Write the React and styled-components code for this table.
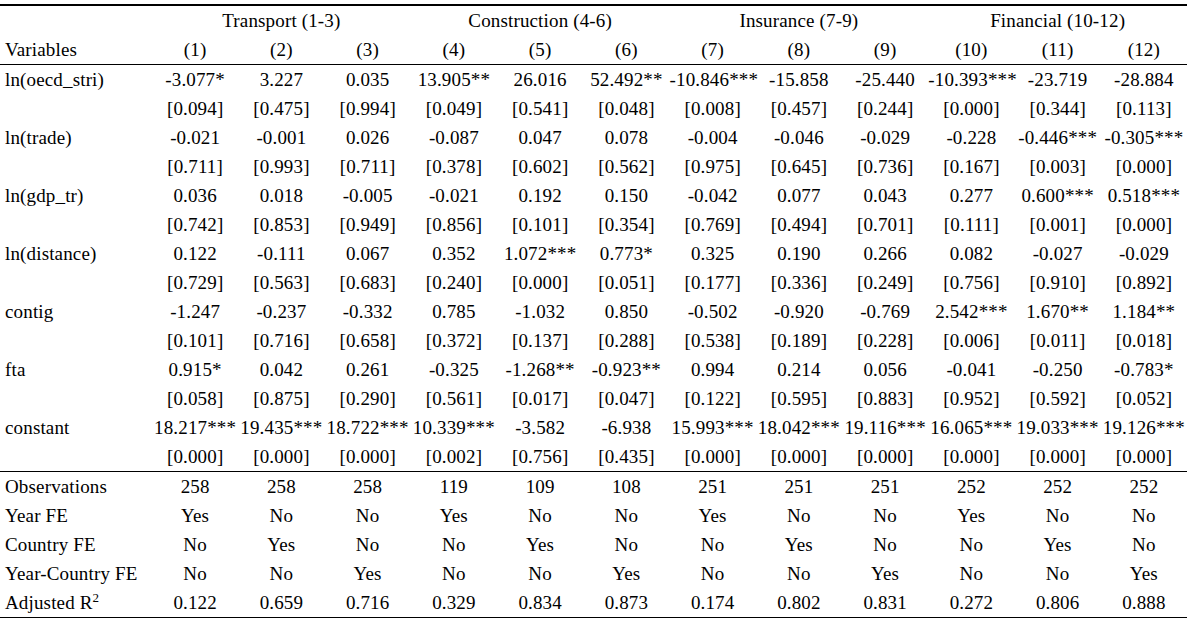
import styled, { createGlobalStyle } from "styled-components";

const GlobalStyle = createGlobalStyle`
    html, body {
        margin: 0;
        padding: 0;
        background: #ffffff;
    }
`

const groups = [
    'Transport (1-3)',
    'Construction (4-6)',
    'Insurance (7-9)',
    'Financial (10-12)',
]

const coefRows = [
    {
        name: 'ln(oecd_stri)',
        coef: ['-3.077*', '3.227', '0.035', '13.905**', '26.016', '52.492**', '-10.846***', '-15.858', '-25.440', '-10.393***', '-23.719', '-28.884'],
        p: ['0.094', '0.475', '0.994', '0.049', '0.541', '0.048', '0.008', '0.457', '0.244', '0.000', '0.344', '0.113'],
    },
    {
        name: 'ln(trade)',
        coef: ['-0.021', '-0.001', '0.026', '-0.087', '0.047', '0.078', '-0.004', '-0.046', '-0.029', '-0.228', '-0.446***', '-0.305***'],
        p: ['0.711', '0.993', '0.711', '0.378', '0.602', '0.562', '0.975', '0.645', '0.736', '0.167', '0.003', '0.000'],
    },
    {
        name: 'ln(gdp_tr)',
        coef: ['0.036', '0.018', '-0.005', '-0.021', '0.192', '0.150', '-0.042', '0.077', '0.043', '0.277', '0.600***', '0.518***'],
        p: ['0.742', '0.853', '0.949', '0.856', '0.101', '0.354', '0.769', '0.494', '0.701', '0.111', '0.001', '0.000'],
    },
    {
        name: 'ln(distance)',
        coef: ['0.122', '-0.111', '0.067', '0.352', '1.072***', '0.773*', '0.325', '0.190', '0.266', '0.082', '-0.027', '-0.029'],
        p: ['0.729', '0.563', '0.683', '0.240', '0.000', '0.051', '0.177', '0.336', '0.249', '0.756', '0.910', '0.892'],
    },
    {
        name: 'contig',
        coef: ['-1.247', '-0.237', '-0.332', '0.785', '-1.032', '0.850', '-0.502', '-0.920', '-0.769', '2.542***', '1.670**', '1.184**'],
        p: ['0.101', '0.716', '0.658', '0.372', '0.137', '0.288', '0.538', '0.189', '0.228', '0.006', '0.011', '0.018'],
    },
    {
        name: 'fta',
        coef: ['0.915*', '0.042', '0.261', '-0.325', '-1.268**', '-0.923**', '0.994', '0.214', '0.056', '-0.041', '-0.250', '-0.783*'],
        p: ['0.058', '0.875', '0.290', '0.561', '0.017', '0.047', '0.122', '0.595', '0.883', '0.952', '0.592', '0.052'],
    },
    {
        name: 'constant',
        coef: ['18.217***', '19.435***', '18.722***', '10.339***', '-3.582', '-6.938', '15.993***', '18.042***', '19.116***', '16.065***', '19.033***', '19.126***'],
        p: ['0.000', '0.000', '0.000', '0.002', '0.756', '0.435', '0.000', '0.000', '0.000', '0.000', '0.000', '0.000'],
    },
]

// sup marks a label that ends in a superscript
const footerRows = [
    {name: 'Observations', values: ['258', '258', '258', '119', '109', '108', '251', '251', '251', '252', '252', '252']},
    {name: 'Year FE', values: ['Yes', 'No', 'No', 'Yes', 'No', 'No', 'Yes', 'No', 'No', 'Yes', 'No', 'No']},
    {name: 'Country FE', values: ['No', 'Yes', 'No', 'No', 'Yes', 'No', 'No', 'Yes', 'No', 'No', 'Yes', 'No']},
    {name: 'Year-Country FE', values: ['No', 'No', 'Yes', 'No', 'No', 'Yes', 'No', 'No', 'Yes', 'No', 'No', 'Yes']},
    {name: 'Adjusted R', sup: '2', values: ['0.122', '0.659', '0.716', '0.329', '0.834', '0.873', '0.174', '0.802', '0.831', '0.272', '0.806', '0.888']},
]

export default function App() {
    const columns = Array.from({length: 12}, (_, i) => i + 1)

    return (
        <>
            <GlobalStyle/>
            <StyledPage>
                <StyledTable>
                    <colgroup>
                        <col style={{width: '152px'}}/>
                        {columns.map(c => <col key={c}/>)}
                    </colgroup>
                    <thead>
                        <tr>
                            <StyledLabel/>
                            {groups.map(g => <StyledCell key={g} colSpan={3}>{g}</StyledCell>)}
                        </tr>
                        <StyledRow $bottom>
                            <StyledLabel>Variables</StyledLabel>
                            {columns.map(c => <StyledCell key={c}>({c})</StyledCell>)}
                        </StyledRow>
                    </thead>
                    <tbody>
                        {coefRows.map((row, idx) => (
                            <RowPair key={row.name} row={row} last={idx === coefRows.length - 1}/>
                        ))}
                        {footerRows.map((row, idx) => (
                            <StyledRow key={row.name} $bottom={idx === footerRows.length - 1}>
                                <StyledLabel>
                                    {row.name}
                                    {row.sup && <StyledSup>{row.sup}</StyledSup>}
                                </StyledLabel>
                                {row.values.map((v, i) => <StyledCell key={i}>{v}</StyledCell>)}
                            </StyledRow>
                        ))}
                    </tbody>
                </StyledTable>
            </StyledPage>
        </>
    )
}

function RowPair({row, last}) {
    return (
        <>
            <tr>
                <StyledLabel>{row.name}</StyledLabel>
                {row.coef.map((v, i) => <StyledCell key={i}>{v}</StyledCell>)}
            </tr>
            <StyledRow $bottom={last}>
                <StyledLabel/>
                {row.p.map((v, i) => <StyledCell key={i}>[{v}]</StyledCell>)}
            </StyledRow>
        </>
    )
}


const StyledPage = styled.div`
    padding-top: 4px;
    width: 1187px;
`

const StyledTable = styled.table`
    width: 1187px;
    table-layout: fixed;
    border-collapse: collapse;
    border-top: 2px solid #000;
    font-family: "Liberation Serif", "Times New Roman", serif;
    font-size: 19px;
    letter-spacing: 0.15px;
    color: #000;
`

const StyledCell = styled.td`
    height: 29px;
    padding: 0;
    text-align: center;
    white-space: nowrap;
    line-height: 29px;
`

const StyledLabel = styled(StyledCell)`
    text-align: left;
    padding-left: 5px;
`

const StyledRow = styled.tr`
    border-bottom: ${props => props.$bottom ? '1px solid #000' : 'none'};
`

const StyledSup = styled.sup`
    font-size: 13px;
    line-height: 0;
    vertical-align: 7px;
`
